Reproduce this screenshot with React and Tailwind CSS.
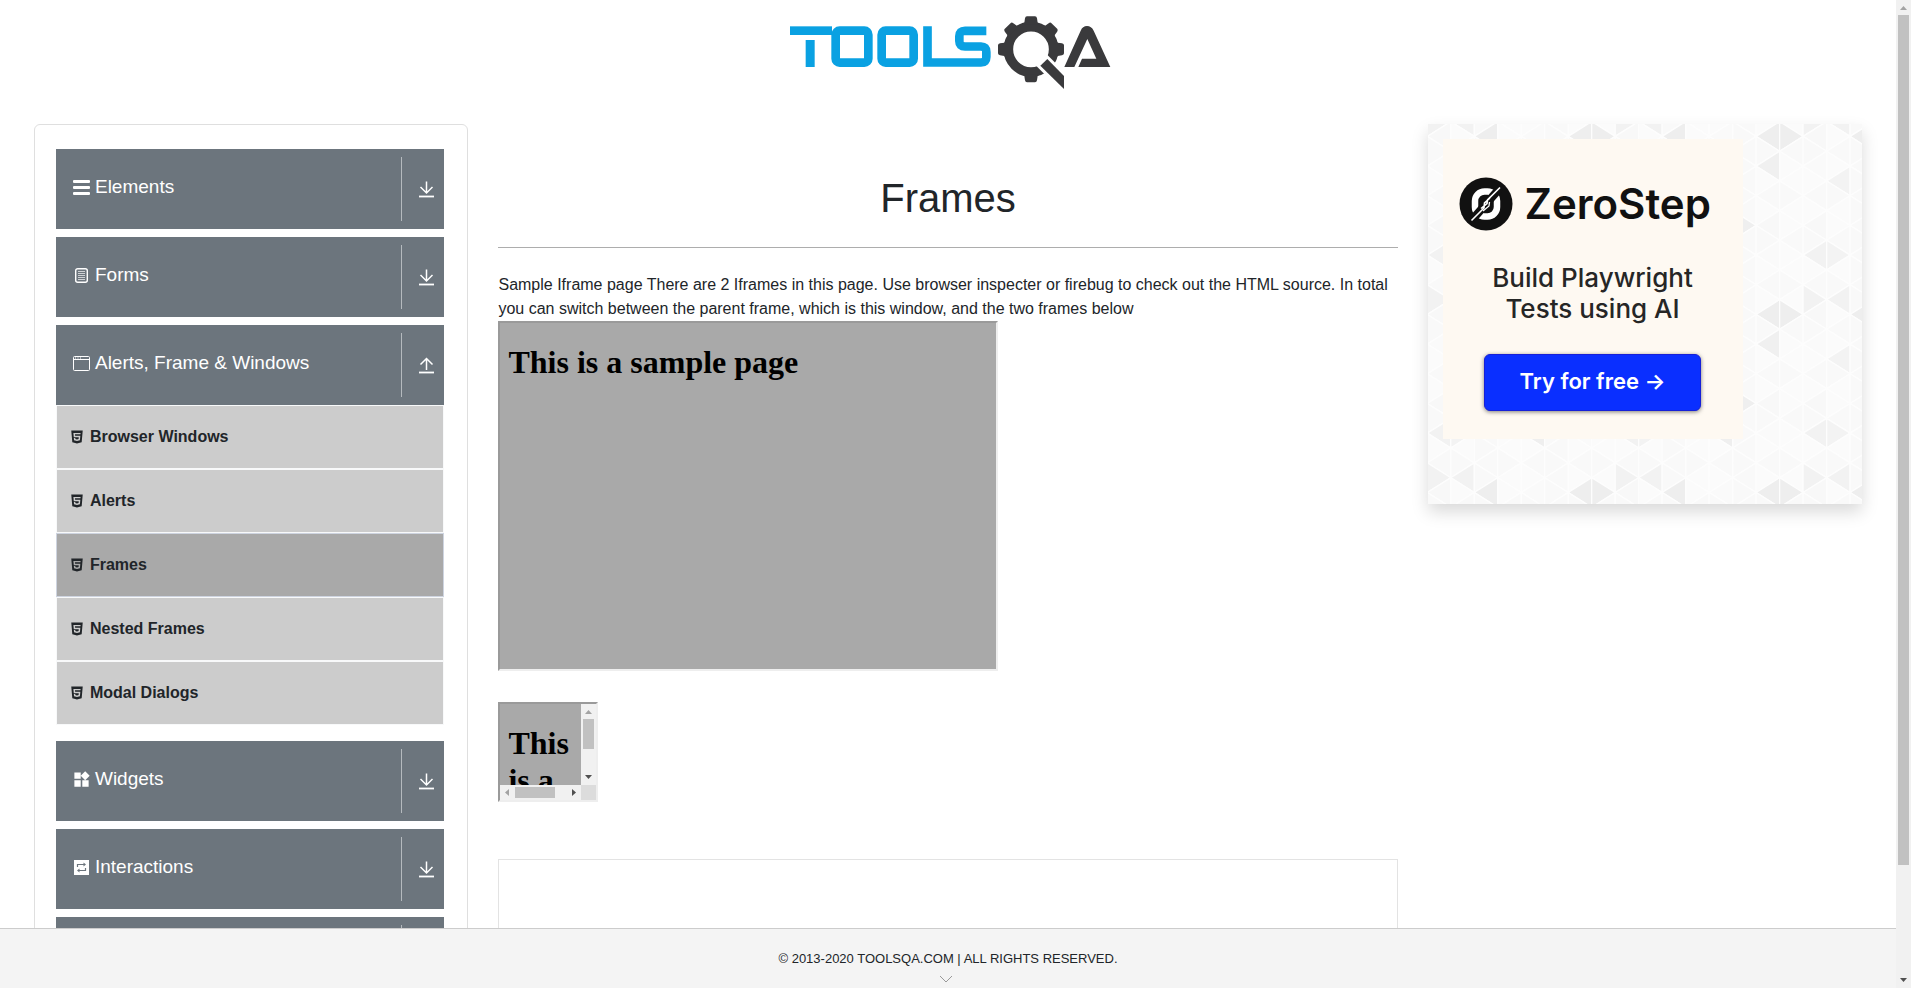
import React from "react";
import { MdWidgets } from "react-icons/md";
import { AiFillHtml5 } from "react-icons/ai";

function Logo() {
  return (
    <svg viewBox="-6 0 1080 300" className="h-[100px] w-[360px]" role="img" aria-label="ToolsQA">
      <g fill="#0aa1e2">
        <rect x="60" y="79" width="126" height="26" />
        <rect x="107" y="120" width="27" height="81" />
      </g>
      <g fill="none" stroke="#0aa1e2" strokeWidth="26">
        <rect x="197" y="92" width="98" height="96" rx="12" />
        <rect x="335" y="92" width="96" height="96" rx="12" />
        <path d="M649 92.5H585Q568 92.5 568 109V123Q568 139.5 585 139.5H633Q649 139.5 649 156V171Q649 187.5 633 187.5H472.5V79" />
      </g>
      <circle cx="783" cy="148" r="68" fill="none" stroke="#3a3a3c" strokeWidth="29" />
      <g fill="#3a3a3c">
        {[0, 45, 90, 180, 225, 270, 315].map((a) => (
          <path
            key={a}
            d="M858 120L863 128L876 130Q882 131 882 136V160Q882 165 876 166L863 168L858 176Z"
            transform={`rotate(${a} 783 148)`}
          />
        ))}
      </g>
      <path d="M800 165.500L890 255.500" stroke="#fff" strokeWidth="47" />
      <path d="M832 177L882 228V267L811 197Z" fill="#3a3a3c" />
      <path
        d="M883 201L932 92Q938 78 951 78Q964 78 971 92L1021 201H925L936 176H979L952 117L913 201Z"
        fill="#3a3a3c"
      />
    </svg>
  );
}

function BarsIcon() {
  return (
    <svg viewBox="0 0 17 17" className="h-[17px] w-[17px]" fill="#fff" aria-hidden="true">
      <rect y="1" width="17" height="3" rx="1" />
      <rect y="7" width="17" height="3" rx="1" />
      <rect y="13" width="17" height="3" rx="1" />
    </svg>
  );
}

function FormIcon() {
  return (
    <svg viewBox="0 0 17 17" className="h-[17px] w-[17px]" fill="none" stroke="#fff" aria-hidden="true">
      <rect x="2.700" y="1.700" width="11.600" height="13.600" rx="2" strokeWidth="1.400" />
      <path d="M5 4.500h7M5 6.500h7M5 8.500h7M5 10.500h7M5 12.500h7" strokeWidth="0.900" opacity=".75" />
    </svg>
  );
}

function WindowIcon() {
  return (
    <svg viewBox="0 0 17 17" className="h-[17px] w-[17px]" fill="none" stroke="#fff" aria-hidden="true">
      <rect x="0.500" y="1.500" width="16" height="14" rx="1" />
      <path d="M1 4.500h15" />
      <path d="M2 3h1M4.500 3h1M7 3h1" strokeWidth="1.200" />
    </svg>
  );
}

function WidgetIcon() {
  return <MdWidgets className="-m-px h-[19px] w-[19px] shrink-0 text-white" aria-hidden="true" />;
}

function InteractionIcon() {
  return (
    <svg viewBox="0 0 17 17" className="h-[17px] w-[17px]" aria-hidden="true">
      <rect x="1" y="1" width="15" height="15" fill="#fff" />
      <g fill="none" stroke="#6c757d" strokeWidth="1.200">
        <path d="M4.500 8V5.500H11M12.500 9V11.500H6" />
      </g>
      <path d="M10.500 3.500l2.500 2-2.500 2zM6.500 9.500L4 11.500l2.500 2z" fill="#6c757d" />
    </svg>
  );
}

function ToggleIcon({ open }) {
  return (
    <svg viewBox="0 0 15 17" className="mt-px h-[17px] w-[15px]" fill="none" stroke="#fff" aria-hidden="true">
      {open ? (
        <path d="M7.500 13V1.500M1.500 7.500L7.500 1.500L13.500 7.500" strokeWidth="1.500" />
      ) : (
        <path d="M7.500 0.500V12M1.500 6L7.500 12L13.500 6" strokeWidth="1.500" />
      )}
      <path d="M0 15.500H15" strokeWidth="1.800" />
    </svg>
  );
}

const groups = [
  { name: "Elements", Icon: BarsIcon },
  { name: "Forms", Icon: FormIcon },
  {
    name: "Alerts, Frame & Windows",
    Icon: WindowIcon,
    items: ["Browser Windows", "Alerts", "Frames", "Nested Frames", "Modal Dialogs"],
  },
  { name: "Widgets", Icon: WidgetIcon },
  { name: "Interactions", Icon: InteractionIcon },
  { name: "Book Store Application", Icon: FormIcon },
];

function Group({ name, Icon, items }) {
  return (
    <div>
      <button
        type="button"
        aria-expanded={Boolean(items)}
        className="flex h-20 w-full items-center bg-[#6c757d] text-left text-[19px] text-white"
      >
        <span className="flex flex-1 items-center gap-[5px] pb-1 pl-[17px]">
          <span className="mt-px">
            <Icon />
          </span>
          {name}
        </span>
        <span className="flex h-16 w-[43px] items-center border-l border-[#b5babe] pl-[17px]">
          <ToggleIcon open={Boolean(items)} />
        </span>
      </button>
      {items && (
        <ul className="mb-2">
          {items.map((item) => (
            <li key={item}>
              <a
                href="#"
                className={
                  item === "Frames"
                    ? "flex h-16 items-center gap-[5px] border border-[#ced4e0] bg-[#a9a9a9] pl-3 font-bold"
                    : "flex h-16 items-center gap-[5px] border border-[#f8f9fa] bg-[#ccc] pl-3 font-bold"
                }
              >
                <AiFillHtml5 className="h-4 w-4" aria-hidden="true" />
                {item}
              </a>
            </li>
          ))}
        </ul>
      )}
    </div>
  );
}

const COL = 23.46;
const HALF = 14.82;
const accents = {
  "6,0": "#eeeeee", "7,0": "#eeeeee", "6,2": "#f0f0f0", "1,3": "#f3f3f3", "5,6": "#efefef",
  "0,8": "#f2f2f2", "1,8": "#f3f3f3", "0,11": "#f2f2f2", "1,11": "#f2f2f2", "2,0": "#eeeeee",
  "4,8": "#efefef",
};
const tints = ["#f8f8f8", "#f9f9f9", "#fafafa", "#fbfbfb", "#f9f9f9", "#fbfbfb"];

function TrianglePattern() {
  const shapes = [];
  for (let c = 0; c < 19; c++) {
    for (let j = -2; j < 26; j++) {
      const x0 = c * COL - 0.7;
      const x1 = x0 + COL;
      const y = 12.4 + j * HALF;
      const left = c % 2 === Math.abs(j) % 2;
      const apex = left ? x0 : x1;
      const base = left ? x1 : x0;
      const cc = c % 8;
      const jj = (j + 12) % 12;
      shapes.push(
        <path
          key={`${c},${j}`}
          d={`M${apex} ${y}L${base} ${y - HALF}V${y + HALF}Z`}
          fill={accents[`${cc},${jj}`] || tints[(cc * 5 + jj * 7 + cc * jj) % 6]}
        />
      );
    }
  }
  return (
    <svg
      viewBox="0 0 434 380"
      preserveAspectRatio="xMinYMin slice"
      className="absolute inset-0 h-full w-full"
      stroke="#fdfdfd"
      strokeWidth="1.300"
      aria-hidden="true"
    >
      {shapes}
    </svg>
  );
}

function Ad() {
  return (
    <aside className="relative h-[380px] bg-[#f8f8f8] p-[15px] shadow-[0_8px_16px_rgba(0,0,0,0.15)]">
      <TrianglePattern />
      <div className="relative flex h-[300px] w-[300px] flex-col items-center bg-[#fef9f2] pt-[38px] font-[Inter,sans-serif]">
        <div className="flex items-center gap-3 self-start pl-4 text-[#111]">
          <svg viewBox="0 0 54 54" className="h-[54px] w-[54px]" aria-hidden="true">
            <circle cx="27" cy="27" r="26.500" fill="#111" />
            <rect x="16" y="14.500" width="22" height="25" rx="9.500" fill="none" stroke="#fff" strokeWidth="6.500" />
            <path d="M13 43L41 11" stroke="#111" strokeWidth="8" />
            <path d="M12.500 43.500L25 31L25.500 26L31 21M22 31.500L28 26.500L28.500 23L41 10.500" fill="none" stroke="#fff" strokeWidth="1.600" />
            <path d="M24 34L30 29L30.500 25" fill="none" stroke="#fff" strokeWidth="1.300" />
          </svg>
          <span className="text-[42px] leading-[54px] font-semibold">ZeroStep</span>
        </div>
        <p className="mt-[31px] text-center text-[26px] leading-[31px] font-medium text-[#262626]">
          Build Playwright
          <br />
          Tests using AI
        </p>
        <button
          type="button"
          className="mt-[30px] h-[57px] w-[217px] rounded-md border border-[#1620d8] bg-[#0a2fff] pb-0.5 text-[22px] font-semibold text-white shadow-[0_1px_4px_rgba(0,0,0,0.5)]"
        >
          Try for free →
        </button>
      </div>
    </aside>
  );
}

function Arrow({ d, color }) {
  return (
    <svg viewBox="0 0 15 15" className="h-[15px] w-[15px] shrink-0" fill={color} aria-hidden="true">
      <path d={d} />
    </svg>
  );
}
const UP = "M4 10L7.500 6L11 10Z";
const DOWN = "M4 5L7.500 9L11 5Z";
const LEFT = "M9 4L5 7.500L9 11Z";
const RIGHT = "M6 4L10 7.500L6 11Z";

export default function App() {
  return (
    <div className="flex h-screen overflow-hidden bg-white font-['Liberation_Sans',Arial,sans-serif] text-base text-[#212529]">
      <div className="flex min-w-0 flex-1 flex-col">
        <div className="min-h-0 flex-1 overflow-hidden">
          <header className="flex h-[124px] justify-center">
            <a href="#" className="h-[100px]">
              <Logo />
            </a>
          </header>
          <div className="flex items-start px-[1%]">
            <nav className="w-1/4 px-[15px]">
              <div className="flex flex-col gap-2 rounded-md border border-[#dfdfdf] pt-6 pr-[23px] pb-6 pl-[21px]">
                {groups.map((g) => (
                  <Group key={g.name} {...g} />
                ))}
              </div>
            </nav>
            <main className="w-1/2 px-[15px]">
              <h1 className="pt-[50px] text-center text-[40px] leading-[48px]">Frames</h1>
              <hr className="mt-[25px] border-[#adadad]" />
              <p className="mt-[25px] leading-6">
                Sample Iframe page There are 2 Iframes in this page. Use browser inspecter or firebug to check out the
                HTML source. In total you can switch between the parent frame, which is this window, and the two frames
                below
              </p>
              <section className="h-[350px] w-[500px] max-w-full border-2 border-t-[#9a9a9a] border-r-[#eee] border-b-[#eee] border-l-[#9a9a9a] bg-[#a9a9a9] px-2 pt-[21px] font-['Liberation_Serif',serif] text-black">
                <h2 className="text-[32px] leading-[37px] font-bold">This is a sample page</h2>
              </section>
              <section className="mt-[31px] flex h-[100px] w-[100px] flex-col border-2 border-t-[#9a9a9a] border-r-[#eee] border-b-[#eee] border-l-[#9a9a9a]">
                <div className="flex min-h-0 flex-1">
                  <div className="min-w-0 flex-1 overflow-hidden bg-[#a9a9a9] px-2 pt-[21px] font-['Liberation_Serif',serif] text-black">
                    <h2 className="text-[32px] leading-[37px] font-bold">This is a sample page</h2>
                  </div>
                  <div className="flex w-[15px] flex-col items-center bg-[#f1f1f1]">
                    <Arrow d={UP} color="#a3a3a3" />
                    <div className="h-[30px] w-[11px] bg-[#c1c1c1]" />
                    <div className="flex-1" />
                    <Arrow d={DOWN} color="#505050" />
                  </div>
                </div>
                <div className="flex h-[15px]">
                  <div className="flex flex-1 items-center bg-[#f1f1f1]">
                    <Arrow d={LEFT} color="#a3a3a3" />
                    <div className="h-[11px] w-10 bg-[#c1c1c1]" />
                    <div className="flex-1" />
                    <Arrow d={RIGHT} color="#505050" />
                  </div>
                  <div className="w-[15px] bg-[#dcdcdc]" />
                </div>
              </section>
              <div className="mt-[57px] h-[120px] border border-[#e3e3e3]" />
            </main>
            <div className="w-1/4 px-[15px]">
              <Ad />
            </div>
          </div>
        </div>
        <footer className="flex h-[60px] shrink-0 flex-col items-center border-t border-[#ccc] bg-[#f4f4f4] pt-5">
          <span className="text-[13px] leading-5">© 2013-2020 TOOLSQA.COM | ALL RIGHTS RESERVED.</span>
          <svg viewBox="0 0 16 8" className="mt-[6px] mr-1 h-2 w-4" fill="none" stroke="#999" aria-hidden="true">
            <path d="M2 1L8 7L14 1" />
          </svg>
        </footer>
      </div>
      <div className="flex w-[15px] flex-col items-center bg-[#f1f1f1]">
        <Arrow d={UP} color="#a3a3a3" />
        <div className="h-[86%] w-[11px] bg-[#c1c1c1]" />
        <div className="flex-1" />
        <Arrow d={DOWN} color="#505050" />
      </div>
    </div>
  );
}
